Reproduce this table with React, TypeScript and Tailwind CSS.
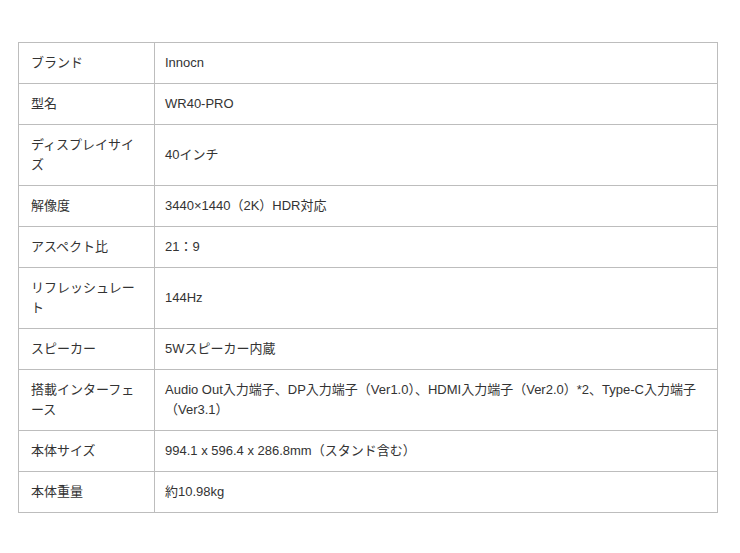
const rows: [string, string][] = [
  ["ブランド", "Innocn"],
  ["型名", "WR40-PRO"],
  ["ディスプレイサイズ", "40インチ"],
  ["解像度", "3440×1440（2K）HDR対応"],
  ["アスペクト比", "21：9"],
  ["リフレッシュレート", "144Hz"],
  ["スピーカー", "5Wスピーカー内蔵"],
  [
    "搭載インターフェース",
    "Audio Out入力端子、DP入力端子（Ver1.0）、HDMI入力端子（Ver2.0）*2、Type-C入力端子（Ver3.1）",
  ],
  ["本体サイズ", "994.1 x 596.4 x 286.8mm（スタンド含む）"],
  ["本体重量", "約10.98kg"],
];

export default function App() {
  return (
    <div className="min-h-screen bg-white pt-[42px] pl-[18px] font-['Liberation_Sans','Noto_Sans_CJK_JP',sans-serif] text-[13px] leading-5 text-[#333]">
      <table className="w-[700px] border-collapse">
        <tbody>
          {rows.map(([label, value]) => (
            <tr key={label}>
              <td className="w-[136px] border border-[#bdbdbd] px-3 py-[10px] align-middle">
                {label}
              </td>
              <td className="border border-[#bdbdbd] px-[10px] py-[10px] align-middle">
                {value}
              </td>
            </tr>
          ))}
        </tbody>
      </table>
    </div>
  );
}
